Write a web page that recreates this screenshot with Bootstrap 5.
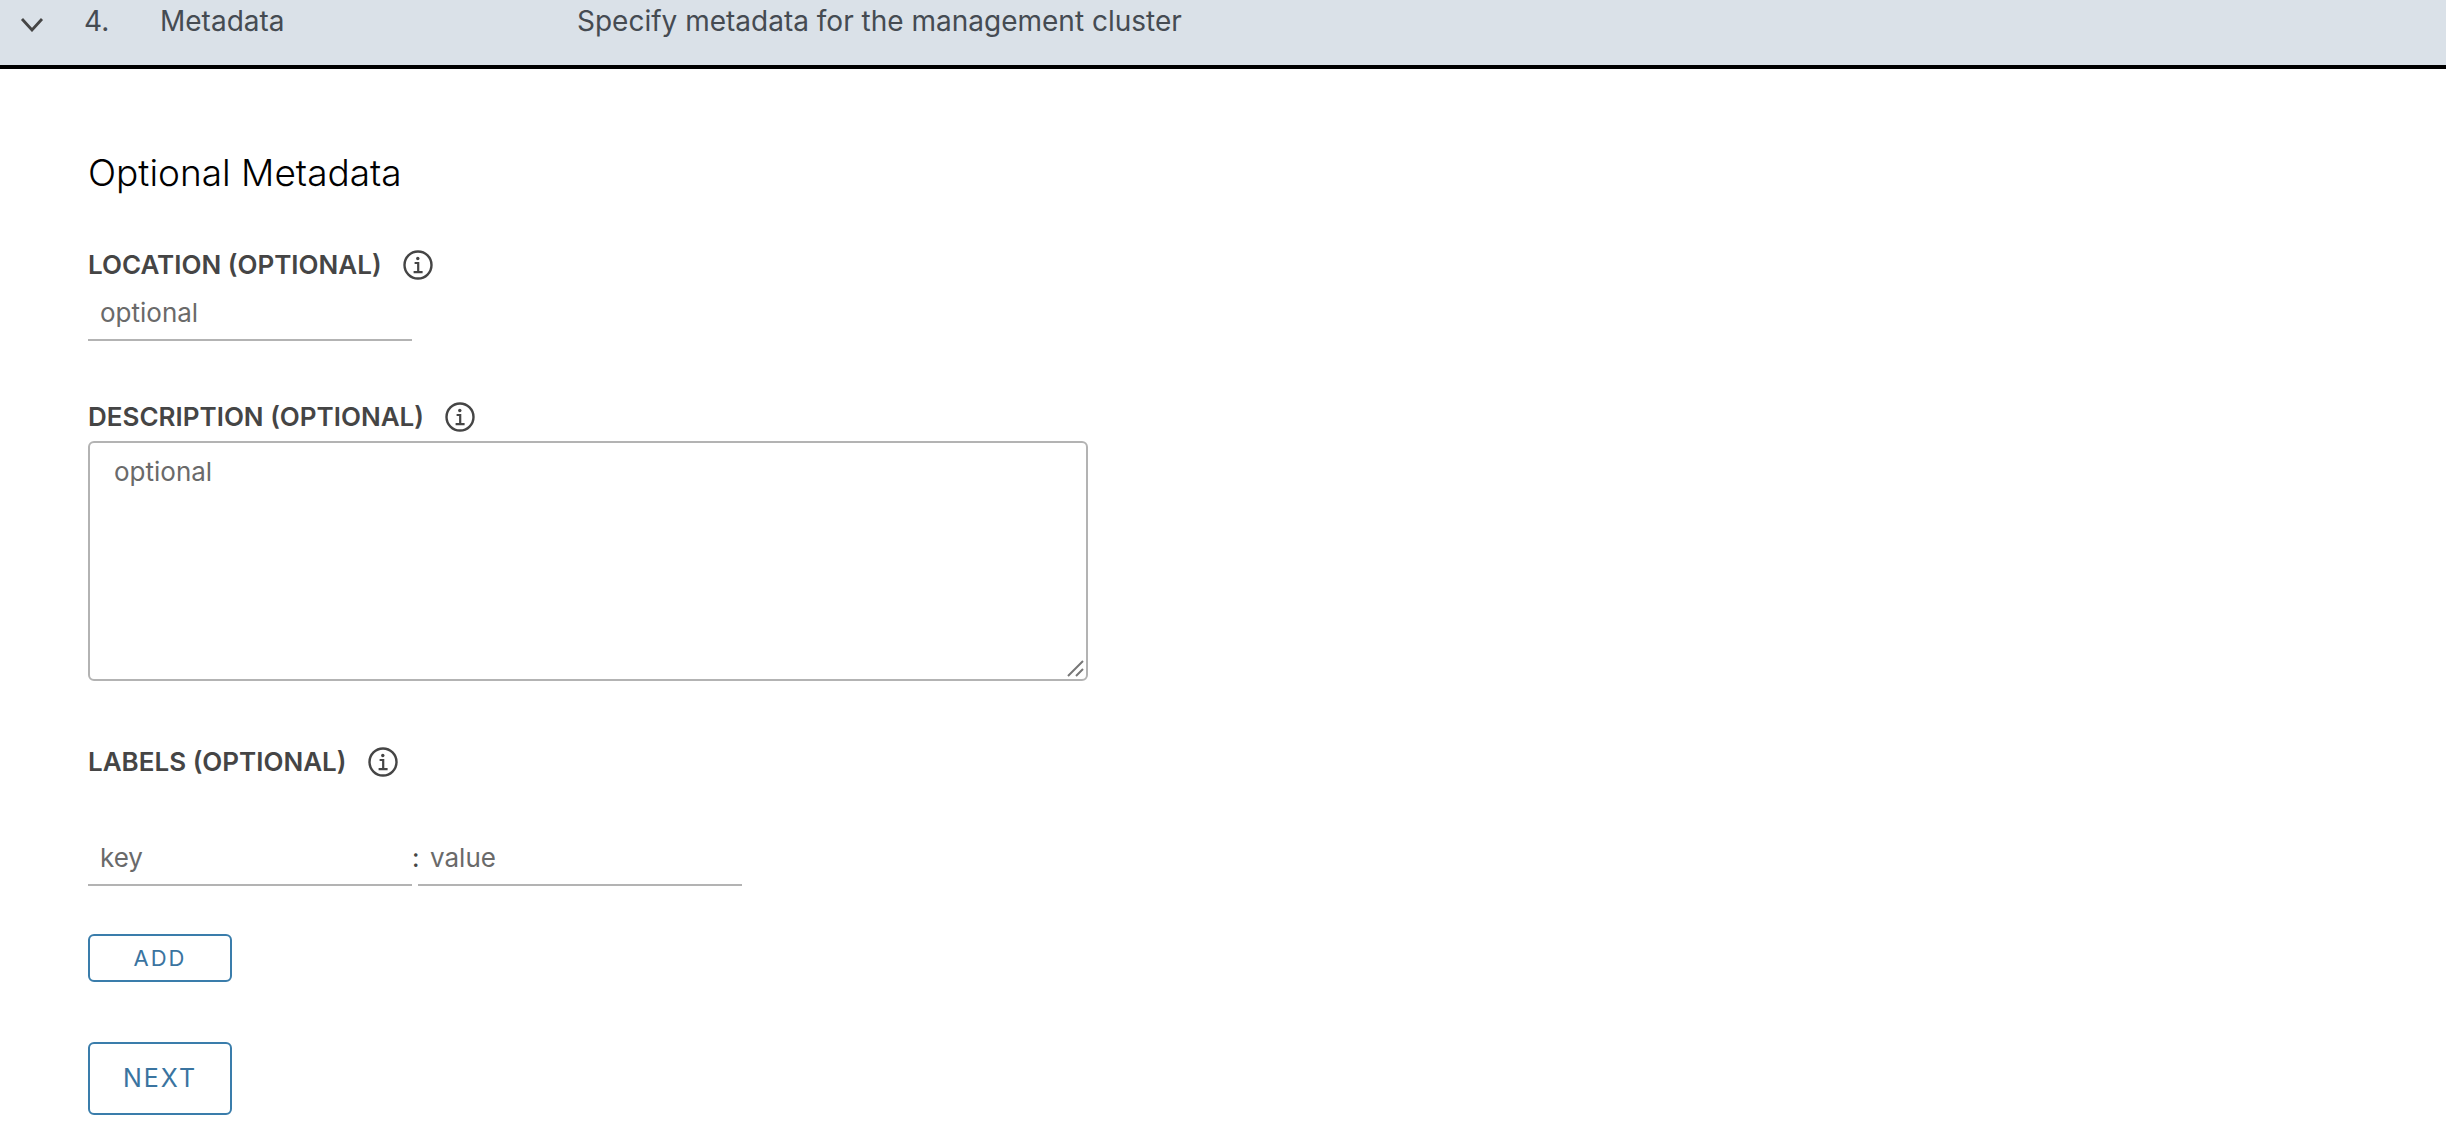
<!DOCTYPE html>
<html lang="en">
<head>
<meta charset="utf-8">
<meta name="viewport" content="width=device-width, initial-scale=1">
<title>Management cluster metadata</title>
<link href="https://cdn.jsdelivr.net/npm/bootstrap@5.3.0/dist/css/bootstrap.min.css" rel="stylesheet">
<style>
  body { font-family: Inter, "Open Sans", sans-serif; color: #454545; background: #fff; font-size: 26px; line-height: 32px; }
  .step-header { background: #dae1e8; border: 0; border-bottom: 4px solid #000; padding: 5px 20px 28px; font-size: 28px; line-height: 32px; color: #454b52; }
  .step-chevron { width: 24px; height: 16px; margin-top: 11px; }
  .step-number { width: 76px; margin-left: 40px; }
  .step-name { width: 417px; }
  .step-body { padding: 80px 88px 32px; }
  .step-title { font-size: 37px; line-height: 48px; font-weight: 300; color: #000; margin-bottom: 52px; }
  .field-label { font-weight: 600; }
  .field-head { gap: 20px; }
  .info-icon { width: 32px; height: 32px; }
  .line-input, .line-input:focus { width: 324px; height: 56px; font-size: 26px; border: 0; border-bottom: 2px solid #b3b3b3; border-radius: 0; padding: 0 12px; background: transparent; }
  .location-input { margin-top: 4px; }
  .description-head { margin-top: 60px; }
  .labels-head { margin-top: 65px; }
  .pair-row { margin-top: 52px; }
  .pair-colon { width: 6px; line-height: 32px; }
  .area-wrap { width: fit-content; max-width: 100%; }
  .area-input { width: 1000px; height: 240px; font-size: 26px; line-height: 32px; border: 2px solid #b3b3b3; border-radius: 6px; padding: 13px 24px; resize: both; }
  .area-input::-webkit-resizer { background: transparent; }
  .area-grip { right: 3px; bottom: 3px; width: 18px; height: 18px; pointer-events: none; }
  .line-input::placeholder, .area-input::placeholder { color: #6a6a6a; opacity: 1; }
  .outline-btn { --bs-btn-color: #3a74a0; --bs-btn-border-color: #3a7dab; --bs-btn-hover-bg: #e6f2f9; --bs-btn-hover-color: #004a70; --bs-btn-hover-border-color: #004a70; width: 144px; border-width: 2px; border-radius: 6px; padding: 0; letter-spacing: 2px; }
  .btn-add { height: 48px; font-size: 22px; }
  .btn-next { height: 73px; font-size: 25px; margin-top: 60px; }
</style>
</head>
<body>
<svg class="d-none" xmlns="http://www.w3.org/2000/svg">
  <symbol id="info" viewBox="0 0 32 32">
    <circle cx="16" cy="16" r="13.5" fill="none" stroke="#454545" stroke-width="2.4"/>
    <circle cx="15.8" cy="9.5" r="1.7" fill="#454545"/>
    <path d="M12.6 14h3.6v9M11.6 23.2h9" fill="none" stroke="#454545" stroke-width="2.2"/>
  </symbol>
</svg>
<button type="button" class="step-header d-flex align-items-start w-100 text-start" aria-expanded="true" aria-controls="metadata-step">
  <svg class="step-chevron flex-shrink-0" viewBox="0 0 24 16" aria-hidden="true"><path d="M2 3l10 11L22 3" fill="none" stroke="#454545" stroke-width="2.8"/></svg>
  <span class="step-number flex-shrink-0">4.</span>
  <span class="step-name flex-shrink-0">Metadata</span>
  <span>Specify metadata for the management cluster</span>
</button>
<main id="metadata-step">
  <form class="step-body">
    <h1 class="step-title">Optional Metadata</h1>

    <div class="field-head d-flex align-items-center">
      <label class="field-label" for="location">LOCATION (OPTIONAL)</label>
      <svg class="info-icon" role="img" aria-label="About location"><use href="#info"/></svg>
    </div>
    <input id="location" type="text" class="form-control line-input location-input" placeholder="optional">

    <div class="field-head description-head d-flex align-items-center">
      <label class="field-label" for="description">DESCRIPTION (OPTIONAL)</label>
      <svg class="info-icon" role="img" aria-label="About description"><use href="#info"/></svg>
    </div>
    <div class="area-wrap position-relative mt-2">
      <textarea id="description" class="form-control area-input d-block" placeholder="optional"></textarea>
      <svg class="area-grip position-absolute" viewBox="0 0 18 18" aria-hidden="true"><path d="M1 16L16 1M9 16l7-7" fill="none" stroke="#777" stroke-width="2"/></svg>
    </div>

    <div class="field-head labels-head d-flex align-items-center">
      <label class="field-label" for="label-key">LABELS (OPTIONAL)</label>
      <svg class="info-icon" role="img" aria-label="About labels"><use href="#info"/></svg>
    </div>
    <div class="pair-row d-flex align-items-center">
      <input id="label-key" type="text" class="form-control line-input" placeholder="key">
      <span class="pair-colon">:</span>
      <input type="text" class="form-control line-input" placeholder="value" aria-label="Label value">
    </div>

    <button type="button" class="btn outline-btn btn-add d-block mt-5">ADD</button>
    <button type="submit" class="btn outline-btn btn-next d-block">NEXT</button>
  </form>
</main>
<script src="https://cdn.jsdelivr.net/npm/bootstrap@5.3.0/dist/js/bootstrap.bundle.min.js"></script>
</body>
</html>
